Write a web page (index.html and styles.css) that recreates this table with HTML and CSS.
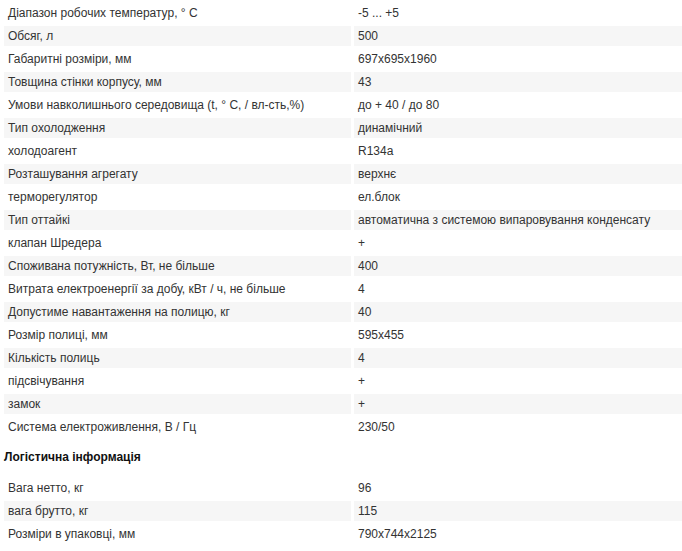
FILE: index.html
```html
<!DOCTYPE html>
<html lang="uk">
<head>
<meta charset="utf-8">
<link rel="stylesheet" href="styles.css">
</head>
<body>
<div class="page">
<table class="specs">
<colgroup><col class="c1"><col class="c2"></colgroup>
<tbody>
<tr><td>Діапазон робочих температур, ° С</td><td>-5 ... +5</td></tr>
<tr><td>Обсяг, л</td><td>500</td></tr>
<tr><td>Габаритні розміри, мм</td><td>697x695x1960</td></tr>
<tr><td>Товщина стінки корпусу, мм</td><td>43</td></tr>
<tr><td>Умови навколишнього середовища (t, ° С, / вл-сть,%)</td><td>до + 40 / до 80</td></tr>
<tr><td>Тип охолодження</td><td>динамічний</td></tr>
<tr><td>холодоагент</td><td>R134a</td></tr>
<tr><td>Розташування агрегату</td><td>верхнє</td></tr>
<tr><td>терморегулятор</td><td>ел.блок</td></tr>
<tr><td>Тип оттайкі</td><td>автоматична з системою випаровування конденсату</td></tr>
<tr><td>клапан Шредера</td><td>+</td></tr>
<tr><td>Споживана потужність, Вт, не більше</td><td>400</td></tr>
<tr><td>Витрата електроенергії за добу, кВт / ч, не більше</td><td>4</td></tr>
<tr><td>Допустиме навантаження на полицю, кг</td><td>40</td></tr>
<tr><td>Розмір полиці, мм</td><td>595x455</td></tr>
<tr><td>Кількість полиць</td><td>4</td></tr>
<tr><td>підсвічування</td><td>+</td></tr>
<tr><td>замок</td><td>+</td></tr>
<tr><td>Система електроживлення, В / Гц</td><td>230/50</td></tr>
</tbody>
</table>
<h3 class="group">Логістична інформація</h3>
<table class="specs">
<colgroup><col class="c1"><col class="c2"></colgroup>
<tbody>
<tr><td>Вага нетто, кг</td><td>96</td></tr>
<tr><td>вага брутто, кг</td><td>115</td></tr>
<tr><td>Розміри в упаковці, мм</td><td>790x744x2125</td></tr>
</tbody>
</table>
</div>
</body>
</html>
```

FILE: styles.css
```css
html, body {
  margin: 0;
  padding: 0;
  overflow: hidden;
  background: #fff;
}
.page {
  width: 710px;
  padding-left: 1px;
  font-family: "Liberation Sans", Arial, sans-serif;
  font-size: 12px;
  color: #333;
}
.specs {
  border-collapse: separate;
  border-spacing: 3px;
  table-layout: fixed;
  width: 706px;
}
.specs .c1 { width: 347px; }
.specs td {
  height: 20px;
  padding: 0 4px;
  line-height: 20px;
  vertical-align: middle;
  white-space: nowrap;
}
.specs tr:nth-child(even) td {
  background: #f6f6f6;
}
.group {
  margin: 0;
  height: 35px;
  line-height: 35px;
  padding-left: 3px;
  font-size: 12px;
  font-weight: bold;
  color: #111;
}
```
